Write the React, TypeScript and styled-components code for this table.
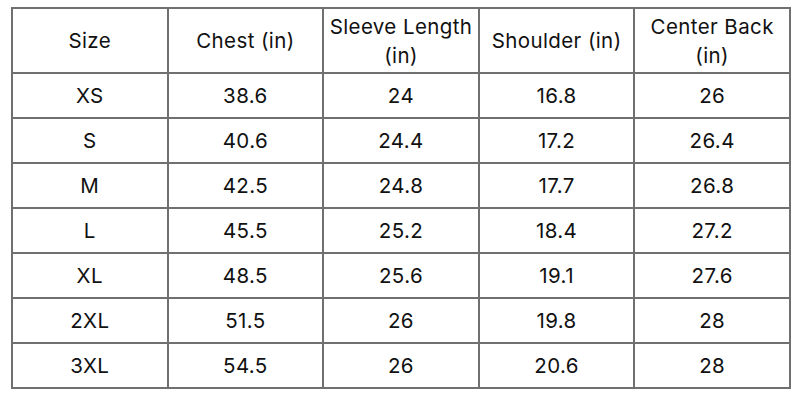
import styled, { createGlobalStyle } from "styled-components";

const GlobalStyle = createGlobalStyle`
  html, body {
    margin: 0;
    padding: 0;
    background: #ffffff;
  }
`;

const Page = styled.div`
  padding: 7px 10px 0 11px;
  font-family: Inter, "Open Sans", sans-serif;
  color: #111;
`;

const Table = styled.table`
  border-collapse: collapse;
  table-layout: fixed;
  width: 780px;
  border-left: 1px solid #111;
`;

const Cell = styled.th<{ $header?: boolean }>`
  border: 2px solid #707070;
  text-align: center;
  vertical-align: middle;
  font-size: 20.5px;
  letter-spacing: 0.4px;
  line-height: ${(p) => (p.$header ? "29px" : "25px")};
  padding: 0 4px;
  height: ${(p) => (p.$header ? "63px" : "43px")};
  font-weight: 400;
`;

const columns = [
  "Size",
  "Chest (in)",
  "Sleeve Length (in)",
  "Shoulder (in)",
  "Center Back (in)",
];

const rows = [
  ["XS", "38.6", "24", "16.8", "26"],
  ["S", "40.6", "24.4", "17.2", "26.4"],
  ["M", "42.5", "24.8", "17.7", "26.8"],
  ["L", "45.5", "25.2", "18.4", "27.2"],
  ["XL", "48.5", "25.6", "19.1", "27.6"],
  ["2XL", "51.5", "26", "19.8", "28"],
  ["3XL", "54.5", "26", "20.6", "28"],
];

export default function App() {
  return (
    <>
      <GlobalStyle />
      <Page>
        <Table>
          <thead>
            <tr>
              {columns.map((c) => (
                <Cell $header key={c}>
                  {c}
                </Cell>
              ))}
            </tr>
          </thead>
          <tbody>
            {rows.map((r) => (
              <tr key={r[0]}>
                {r.map((v, i) => (
                  <Cell as="td" key={i}>
                    {v}
                  </Cell>
                ))}
              </tr>
            ))}
          </tbody>
        </Table>
      </Page>
    </>
  );
}
